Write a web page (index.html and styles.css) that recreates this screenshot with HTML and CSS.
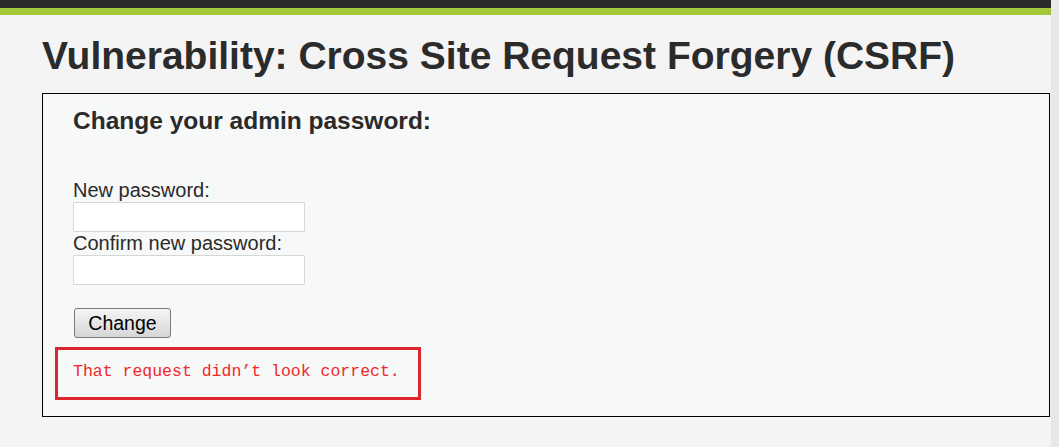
FILE: index.html
```html
<!DOCTYPE html>
<html>
<head>
<meta charset="utf-8">
<link rel="stylesheet" href="styles.css">
</head>
<body>
<div class="page">
  <div class="topbar"></div>
  <div class="greenbar"></div>
  <div class="content">
    <h1 class="title">Vulnerability: Cross Site Request Forgery (CSRF)</h1>
    <div class="vulnerable">
      <h2 class="subtitle">Change your admin password:</h2>
      <form class="form">
        <label class="label">New password:</label>
        <input class="field" type="password">
        <label class="label">Confirm new password:</label>
        <input class="field" type="password">
        <button class="btn" type="button">Change</button>
      </form>
      <div class="error">That request didn’t look correct.</div>
    </div>
  </div>
</div>
</body>
</html>
```
FILE: styles.css
```css
html, body {
  margin: 0;
  padding: 0;
}
body {
  background: #e8e8e8;
  font-family: "Liberation Sans", Arial, sans-serif;
  color: #2a2a2a;
}
.page {
  width: 1051px;
  height: 447px;
  background: #f4f4f4;
  display: flex;
  flex-direction: column;
}
.topbar {
  height: 8px;
  background: #2b2b2b;
}
.greenbar {
  height: 7px;
  background: #a3c837;
}
.content {
  padding: 19px 0 0 42px;
}
.title {
  margin: 0;
  font-size: 39px;
  line-height: 44px;
  font-weight: bold;
  color: #2b2b2b;
}
.vulnerable {
  margin-top: 15px;
  width: 976px;
  height: 309px;
  border: 1px solid #000;
  background: #f7f8f8;
  padding: 13px 0 0 30px;
  display: flex;
  flex-direction: column;
  align-items: flex-start;
}
.subtitle {
  margin: 0;
  font-size: 24.5px;
  line-height: 28px;
  font-weight: bold;
  color: #2a2a2a;
}
.form {
  margin-top: 44px;
  display: flex;
  flex-direction: column;
  align-items: flex-start;
}
.label {
  display: block;
  font-size: 20px;
  line-height: 23px;
  color: #2a2a2a;
}
.field {
  width: 232px;
  height: 30px;
  box-sizing: border-box;
  margin: 0;
  border: 1px solid #d6d6d6;
  background: #fff;
  border-radius: 1px;
  padding: 0;
}
.btn {
  margin: 23px 0 0 1px;
  width: 97px;
  height: 30px;
  box-sizing: border-box;
  border: 1px solid #7a7a7a;
  border-radius: 3px;
  background: linear-gradient(#f4f4f4, #e6e6e6 50%, #d6d6d6);
  font-family: "Liberation Sans", Arial, sans-serif;
  font-size: 19.5px;
  color: #000;
  padding: 0;
}
.error {
  margin: 9px 0 0 -18px;
  box-sizing: border-box;
  width: 366px;
  height: 53px;
  border: 3px solid #dd2530;
  padding: 12px 0 0 15px;
  font-family: "Liberation Mono", "Courier New", monospace;
  font-size: 16.5px;
  line-height: 20px;
  color: #f02828;
}
```
